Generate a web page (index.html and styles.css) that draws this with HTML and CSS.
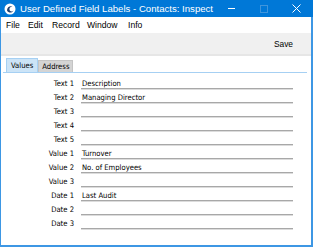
FILE: index.html
```html
<!DOCTYPE html>
<html lang="en">
<head>
  <meta charset="UTF-8">
  <title>User Defined Field Labels</title>
  <link rel="stylesheet" href="styles.css">
</head>
<body>

  <div class="window">
    <div class="titlebar">
      <svg class="app-icon" width="12" height="12" viewBox="0 0 12 12">
        <circle cx="6" cy="6" r="5.5" fill="#fff"/>
        <path d="M3 7.5 C3 4 6 2.5 8.5 3.5 C6.5 3.5 5 5 5.5 7 C6 8.5 8 9 9.5 7.5 C8.5 10 4.5 10.5 3 7.5 Z" fill="#1d3f6e"/>
      </svg>
      <span class="title">User Defined Field Labels - Contacts: Inspect</span>
      <div class="controls">
        <span class="ctl-min"></span>
        <span class="ctl-max"></span>
        <svg class="ctl-close" width="9" height="9" viewBox="0 0 9 9">
          <path d="M0.5 0.5 L8.5 8.5 M8.5 0.5 L0.5 8.5" stroke="#fff" stroke-width="1"/>
        </svg>
      </div>
    </div>

    <div class="menubar">
      <span class="m-file">File</span>
      <span class="m-edit">Edit</span>
      <span class="m-record">Record</span>
      <span class="m-window">Window</span>
      <span>Info</span>
    </div>

    <div class="toolbar">
      <span class="save">Save</span>
    </div>

    <div class="tabs">
      <span class="tab active">Values</span>
      <span class="tab">Address</span>
    </div>

    <div class="form">
      <div class="row"><label>Text 1</label><div class="field">Description</div></div>
      <div class="row"><label>Text 2</label><div class="field">Managing Director</div></div>
      <div class="row"><label>Text 3</label><div class="field"></div></div>
      <div class="row"><label>Text 4</label><div class="field"></div></div>
      <div class="row"><label>Text 5</label><div class="field"></div></div>
      <div class="row"><label>Value 1</label><div class="field">Turnover</div></div>
      <div class="row"><label>Value 2</label><div class="field">No. of Employees</div></div>
      <div class="row"><label>Value 3</label><div class="field"></div></div>
      <div class="row"><label>Date 1</label><div class="field">Last Audit</div></div>
      <div class="row"><label>Date 2</label><div class="field"></div></div>
      <div class="row"><label>Date 3</label><div class="field"></div></div>
    </div>
  </div>

</body>
</html>
```

FILE: styles.css
```css
* {
  box-sizing: border-box;
  margin: 0;
  padding: 0;
}

body {
  width: 313px;
  height: 247px;
  overflow: hidden;
  background: #fff;
  font-family: "Liberation Sans", Arial, sans-serif;
  color: #000;
}

.window {
  width: 313px;
  height: 247px;
  border-left: 1px solid #3d97e4;
  border-right: 2px solid #3d97e4;
  border-bottom: 2px solid #3d97e4;
  display: flex;
  flex-direction: column;
}

.titlebar {
  height: 17px;
  background: #0078d7;
  color: #fff;
  display: flex;
  align-items: center;
  margin: 0 -2px 0 -1px;
  padding-left: 4px;
}

.app-icon {
  flex: none;
}

.title {
  margin-left: 4px;
  font-size: 9.6px;
  white-space: nowrap;
}

.controls {
  margin-left: auto;
  display: flex;
  align-items: center;
  height: 100%;
}

.ctl-min {
  width: 7px;
  height: 1px;
  background: #fff;
  margin-right: 25px;
}

.ctl-max {
  width: 8px;
  height: 8px;
  border: 1px solid #3f95dc;
  margin-right: 24px;
}

.ctl-close {
  margin-right: 12px;
}

.menubar {
  height: 16px;
  display: flex;
  align-items: center;
  font-size: 8.6px;
  padding-left: 5px;
}

.m-file { width: 22px; }
.m-edit { width: 24px; }
.m-record { width: 35px; }
.m-window { width: 41px; }

.toolbar {
  height: 23px;
  background: #f0f0f0;
  border-bottom: 2px solid #e6e6e6;
  display: flex;
  align-items: center;
  justify-content: flex-end;
  padding-right: 18px;
  padding-top: 1px;
}

.save {
  font-size: 8.4px;
}

.tabs {
  margin: 2px 4px 0 2px;
  padding-left: 3px;
  display: flex;
  align-items: flex-end;
  border-bottom: 1px solid #a6d0f3;
  height: 15px;
  font-family: "DejaVu Sans Condensed", "DejaVu Sans", sans-serif;
}

.tab {
  font-size: 7.6px;
  height: 12px;
  line-height: 12px;
  padding: 0 3px;
  background: #d4d4d4;
  border: 1px solid #c4c4c4;
  border-bottom: none;
}

.tab.active {
  height: 14px;
  line-height: 13px;
  background: #cce4f7;
  border-color: #a6d0f3;
  padding: 0 4px;
}

.form {
  padding-top: 2px;
  display: flex;
  flex-direction: column;
  font-family: "DejaVu Sans Condensed", "DejaVu Sans", sans-serif;
}

.row {
  display: flex;
  height: 14px;
  font-size: 7.6px;
  padding-top: 4px;
}

.row label {
  width: 73px;
  text-align: right;
  line-height: 10px;
}

.field {
  margin-left: 7px;
  width: 212px;
  height: 10px;
  line-height: 9px;
  padding-left: 1px;
  border-bottom: 1px solid #a8a8a8;
  box-shadow: 0 1px 0 #dcdcdc;
}
```
